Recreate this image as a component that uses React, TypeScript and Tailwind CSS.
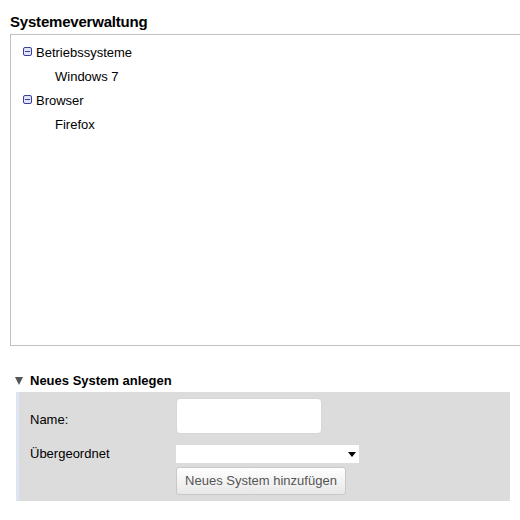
import React from 'react';

const tree = [
  { label: 'Betriebssysteme', children: ['Windows 7'] },
  { label: 'Browser', children: ['Firefox'] },
];

function MinusBox() {
  return (
    <svg width="9" height="9" viewBox="0 0 9 9" className="mb-[3px] shrink-0">
      <rect x="0.5" y="0.5" width="8" height="8" rx="1.5" fill="#dfe4fb" stroke="#3a3f9e" />
      <rect x="2" y="4" width="5" height="1" fill="#3a3f9e" />
    </svg>
  );
}

export default function App() {
  return (
    <div className="min-h-[520px] bg-white font-['Liberation_Sans',Arial,sans-serif] text-[13px] text-black">
      <h1 className="ml-[10px] pt-[13px] text-[15px] font-bold leading-[18px] tracking-[-0.2px]">Systemeverwaltung</h1>

      <div className="ml-[10px] mt-[3px] h-[312px] w-[520px] border border-[#c0c0c0] pl-[12px] pt-[6px]">
        {tree.map((node) => (
          <div key={node.label}>
            <div className="flex h-[24px] items-center gap-[4px]">
              <MinusBox />
              <span>{node.label}</span>
            </div>
            {node.children.map((c) => (
              <div key={c} className="flex h-[24px] items-center pl-[32px]">
                {c}
              </div>
            ))}
          </div>
        ))}
      </div>

      <div className="ml-[15px] mt-[28px] flex h-[14px] items-center gap-[7px]">
        <span className="h-0 w-0 border-x-[4.5px] border-t-[8px] border-x-transparent border-t-[#555]" />
        <span className="font-bold">Neues System anlegen</span>
      </div>

      <div className="ml-[16px] mt-[4px] w-[494px] border-l-[3px] border-[#dde6f2] bg-[#dcdcdc] pb-[6px] pl-[11px] pt-[6px]">
        <div className="grid grid-cols-[146px_auto] items-center">
          <label className="mt-[8px]">Name:</label>
          <input className="h-[36px] w-[146px] rounded-[4px] border border-[#d6d6d6] bg-white outline-none" />

          <label className="mt-[10px]">Übergeordnet</label>
          <div className="relative mt-[10px] h-[18px] w-[183px] bg-white">
            <select className="h-full w-full appearance-none bg-white outline-none" />
            <span className="pointer-events-none absolute right-[3px] top-[7px] h-0 w-0 border-x-[4px] border-t-[5px] border-x-transparent border-t-black" />
          </div>

          <div />
          <button className="mt-[3px] h-[28px] w-[170px] rounded-[3px] border border-[#c8c8c8] bg-gradient-to-b from-white to-[#e8e8e8] text-[13px] text-[#555]">
            Neues System hinzufügen
          </button>
        </div>
      </div>
    </div>
  );
}
